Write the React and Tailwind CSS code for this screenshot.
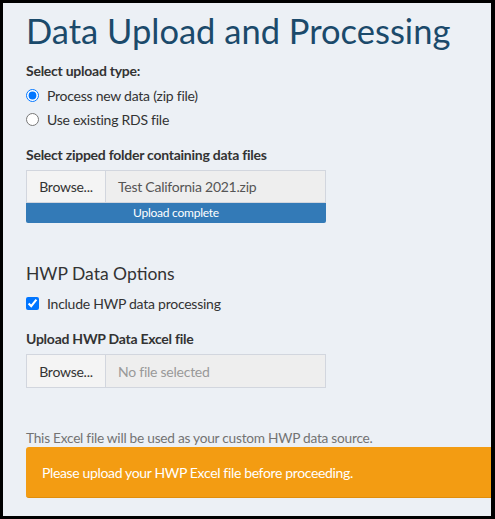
export default function App() {
  return (
    <div className="w-[495px] h-[519px] bg-black pt-[3px] pl-[3px] pr-[4px] pb-[3px] font-['Lato',sans-serif]">
      <div className="h-full bg-[#ecf0f5] pl-[23px] overflow-hidden text-[#333] text-[14px] tracking-[-0.25px]">
        <h1 className="text-[34.5px] leading-[42px] text-[#1b4a6b] pt-[7px] tracking-[0px]">
          Data Upload and Processing
        </h1>

        <div className="mt-[8px] font-bold">Select upload type:</div>
        <label className="flex items-center gap-[8px] mt-[4px] h-[20px]">
          <input type="radio" name="t" defaultChecked className="w-[13px] h-[13px] m-0 accent-[#0075ff]" />
          <span>Process new data (zip file)</span>
        </label>
        <label className="flex items-center gap-[8px] mt-[4px] h-[20px]">
          <input type="radio" name="t" className="w-[13px] h-[13px] m-0" />
          <span>Use existing RDS file</span>
        </label>

        <div className="mt-[15px] font-bold">Select zipped folder containing data files</div>
        <div className="mt-[5px] w-[300px]">
          <div className="flex h-[33px] border border-[#d2d6de] bg-[#eeeeee]">
            <div className="w-[79px] shrink-0 flex items-center justify-center bg-[#f4f4f4] border-r border-[#d2d6de]">
              Browse...
            </div>
            <div className="flex items-center pl-[12px] text-[#555]">Test California 2021.zip</div>
          </div>
          <div className="h-[20px] bg-[#337ab7] text-white text-[12px] flex items-center justify-center rounded-b-[2px]">
            Upload complete
          </div>
        </div>

        <h2 className="mt-[39px] text-[17.5px] leading-[24px] tracking-[0px]">HWP Data Options</h2>
        <label className="flex items-center gap-[8px] mt-[7px] h-[20px]">
          <input type="checkbox" defaultChecked className="w-[13px] h-[13px] m-0 accent-[#0075ff]" />
          <span>Include HWP data processing</span>
        </label>

        <div className="mt-[15px] font-bold">Upload HWP Data Excel file</div>
        <div className="mt-[5px] w-[300px] flex h-[34px] border border-[#d2d6de] bg-[#eeeeee]">
          <div className="w-[79px] shrink-0 flex items-center justify-center bg-[#f4f4f4] border-r border-[#d2d6de]">
            Browse...
          </div>
          <div className="flex items-center pl-[12px] text-[#999]">No file selected</div>
        </div>

        <p className="mt-[41px] text-[#737373] text-[13.7px] leading-[18px]">
          This Excel file will be used as your custom HWP data source.
        </p>
        <div className="mt-[0px] h-[51px] bg-[#f39c12] border-b border-[#e08e0b] rounded-l-[3px] flex items-center pl-[16px] text-white text-[14px] tracking-[-0.35px]">
          Please upload your HWP Excel file before proceeding.
        </div>
      </div>
    </div>
  );
}
